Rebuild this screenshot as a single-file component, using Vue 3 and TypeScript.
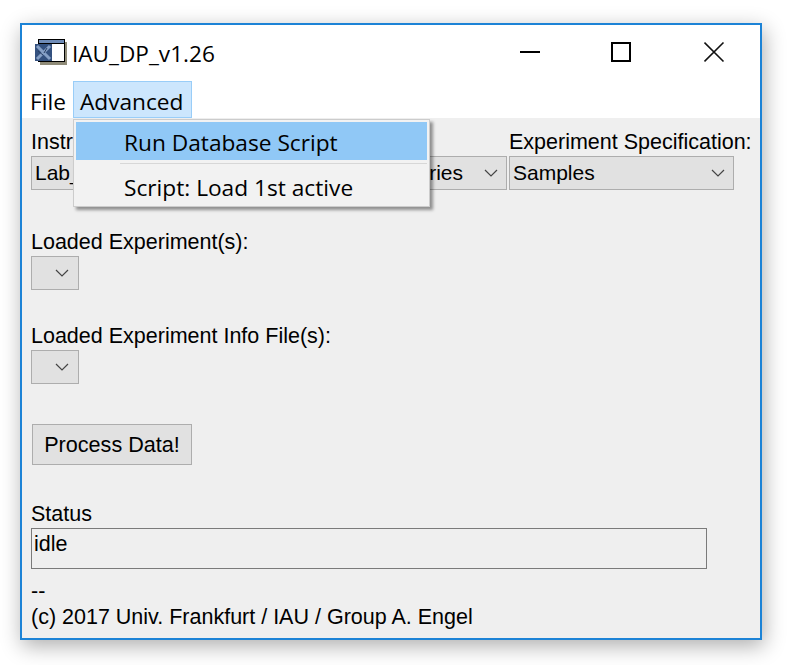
<template>
  <div class="page">
    <div class="window">
      <header class="titlebar">
        <svg class="app-icon" width="33" height="26" viewBox="0 0 33 26">
          <rect x="5" y="3" width="27" height="23" fill="#8f8b78" />
          <rect x="3.5" y="0.5" width="26" height="22" fill="#fff" stroke="#000" stroke-width="1" />
          <rect x="3.5" y="0.5" width="26" height="4" fill="#6f8cb8" stroke="#000" stroke-width="1" />
          <rect x="0" y="5" width="17" height="17" fill="#34517f" />
          <path d="M2 7 L15 20 M15 7 L2 20" stroke="#86a0c6" stroke-width="3" />
          <path d="M3 12 L8 16 M12 9 L9 14" stroke="#2a3f63" stroke-width="1" />
        </svg>
        <span class="title">IAU_DP_v1.26</span>
        <div class="caption-buttons">
          <svg width="22" height="22" viewBox="0 0 22 22" class="cap-min"><path d="M0 11 H20" stroke="#000" stroke-width="2" /></svg>
          <svg width="22" height="22" viewBox="0 0 22 22" class="cap-max"><rect x="1" y="2" width="18" height="18" fill="none" stroke="#000" stroke-width="2" /></svg>
          <svg width="22" height="22" viewBox="0 0 22 22" class="cap-close"><path d="M0.5 1.5 L19.5 20.5 M19.5 1.5 L0.5 20.5" stroke="#111" stroke-width="1.6" /></svg>
        </div>
      </header>

      <nav class="menubar">
        <span class="menu-item">File</span>
        <span class="menu-item active">Advanced</span>
      </nav>

      <main class="content">
        <div class="spec-row">
          <div class="field">
            <label>Instr</label>
            <div class="select"><span>Lab_</span><svg class="chevron" width="14" height="8" viewBox="0 0 14 8"><path d="M1 1 L7 7 L13 1" fill="none" stroke="#444" stroke-width="1.2" /></svg></div>
          </div>
          <div class="field">
            <label>&nbsp;</label>
            <div class="select"><span class="right-text">Series</span><svg class="chevron" width="14" height="8" viewBox="0 0 14 8"><path d="M1 1 L7 7 L13 1" fill="none" stroke="#444" stroke-width="1.2" /></svg></div>
          </div>
          <div class="field">
            <label>Experiment Specification:</label>
            <div class="select spec"><span>Samples</span><svg class="chevron" width="14" height="8" viewBox="0 0 14 8"><path d="M1 1 L7 7 L13 1" fill="none" stroke="#444" stroke-width="1.2" /></svg></div>
          </div>
        </div>

        <div class="block first">
          <label>Loaded Experiment(s):</label>
          <div class="select small"><svg class="chevron" width="14" height="8" viewBox="0 0 14 8"><path d="M1 1 L7 7 L13 1" fill="none" stroke="#444" stroke-width="1.2" /></svg></div>
        </div>

        <div class="block second">
          <label>Loaded Experiment Info File(s):</label>
          <div class="select small"><svg class="chevron" width="14" height="8" viewBox="0 0 14 8"><path d="M1 1 L7 7 L13 1" fill="none" stroke="#444" stroke-width="1.2" /></svg></div>
        </div>

        <button class="process">Process Data!</button>

        <div class="status">
          <label>Status</label>
          <div class="status-box">idle</div>
        </div>

        <p class="footer">--</p>
        <p class="footer">(c) 2017 Univ. Frankfurt / IAU / Group A. Engel</p>
      </main>

      <div class="dropdown">
        <div class="drop-item selected">Run Database Script</div>
        <div class="drop-sep"></div>
        <div class="drop-item last">Script: Load 1st active</div>
      </div>
    </div>
  </div>
</template>

<script setup lang="ts">
</script>

<style>
html, body {
  background: #fff;
}
</style>

<style scoped>
.page {
  box-sizing: border-box;
  width: 792px;
  height: 665px;
  padding: 23px 0 0 20px;
  overflow: hidden;
}

.window {
  position: relative;
  box-sizing: border-box;
  width: 742px;
  height: 617px;
  border: 2px solid #1c83d6;
  background: #fff;
  box-shadow: 2px 6px 20px rgba(0, 0, 0, 0.32);
  display: flex;
  flex-direction: column;
  font-family: "Liberation Sans", Arial, sans-serif;
  color: #000;
}

.titlebar {
  height: 56px;
  display: flex;
  align-items: center;
  padding-left: 13px;
  flex-shrink: 0;
}

.app-icon {
  margin: -2px 4px 0 0;
}

.title {
  font-family: "Open Sans", sans-serif;
  font-size: 22.6px;
}

.caption-buttons {
  margin: -2px 0 0 auto;
  display: flex;
  align-items: center;
  padding-right: 34px;
}

.cap-max {
  margin: 0 71px 0 69px;
}

.menubar {
  height: 37px;
  display: flex;
  align-items: stretch;
  font-family: "Open Sans", sans-serif;
  font-size: 22.7px;
  flex-shrink: 0;
}

.menu-item {
  display: flex;
  align-items: center;
  padding: 3px 7px 0 8px;
}

.menu-item.active {
  box-sizing: border-box;
  background: #cce6fd;
  border: 1px solid #99cdf8;
  width: 119px;
  padding: 3px 0 0 6px;
}

.content {
  flex: 1;
  background: #efefef;
  padding: 12px 9px 0;
  font-size: 21.5px;
  min-height: 0;
}

label {
  display: block;
  line-height: 24px;
  height: 24px;
  white-space: nowrap;
}

.spec-row {
  display: grid;
  grid-template-columns: 238px 238px auto;
}

.field:last-child {
  margin-left: 2px;
}

.select {
  box-sizing: border-box;
  height: 34px;
  margin-top: 2px;
  background: #e1e1e1;
  border: 1px solid #adadad;
  display: flex;
  align-items: center;
  padding: 0 8px 0 3px;
  font-size: 21px;
}

.select .chevron {
  margin-left: auto;
}

.select.spec {
  width: 225px;
}

.select.small {
  width: 48px;
  padding-right: 9px;
}

.right-text {
  margin-left: auto;
}

.select .right-text + .chevron {
  margin-left: 21px;
}

.block.first {
  margin-top: 40px;
}

.block.second {
  margin-top: 34px;
}

.process {
  display: block;
  box-sizing: border-box;
  margin: 40px 0 0 1px;
  width: 160px;
  height: 41px;
  background: #e1e1e1;
  border: 1px solid #adadad;
  font-family: inherit;
  font-size: 21.6px;
  padding: 0;
  color: #000;
}

.status {
  margin-top: 37px;
}

.status-box {
  box-sizing: border-box;
  width: 676px;
  height: 41px;
  margin-top: 2px;
  border: 1px solid #7a7a7a;
  padding: 2px 2px 0;
  font-size: 21.5px;
  line-height: 26px;
}

.footer {
  margin: 0;
  line-height: 26px;
}

.status + .footer {
  margin-top: 9px;
}

.dropdown {
  position: absolute;
  left: 51px;
  top: 94px;
  width: 357px;
  box-sizing: border-box;
  background: #f2f2f2;
  border: 1px solid #ccc;
  padding: 2px;
  box-shadow: 3px 3px 3px rgba(0, 0, 0, 0.4);
  font-family: "Open Sans", sans-serif;
  font-size: 22.7px;
}

.drop-item {
  height: 38px;
  line-height: 42px;
  padding-left: 48px;
}

.drop-item.last {
  height: 37px;
}

.drop-item.selected {
  background: #90c8f6;
}

.drop-sep {
  height: 1px;
  background: #d7d7d7;
  margin: 3px 0 3px 44px;
}
</style>
